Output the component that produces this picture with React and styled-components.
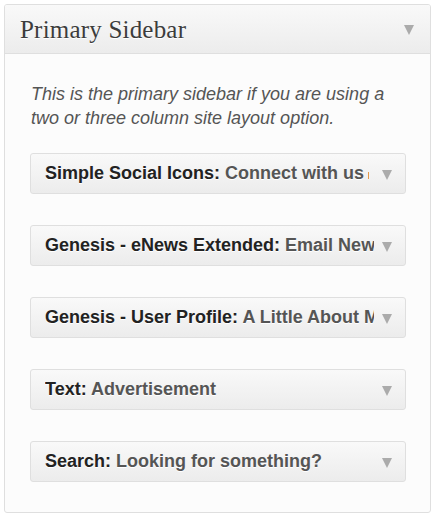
import React from 'react'
import styled, { createGlobalStyle } from 'styled-components'

const Global = createGlobalStyle`
    html, body {
        margin: 0;
        padding: 0;
        background: #ffffff;
    }
    body {
        padding: 4px 6px 4px 4px;
    }
`;

const Panel = styled.section`
    width: 427px;
    box-sizing: border-box;
    border: 1px solid #dfdfdf;
    border-radius: 3px;
    background: #fcfcfc;
    overflow: hidden;
`;

const Header = styled.div`
    display: flex;
    align-items: center;
    justify-content: space-between;
    height: 48px;
    padding: 0 16px 0 15px;
    background: linear-gradient(to bottom, #f9f9f9, #ececec);
    border-bottom: 1px solid #dfdfdf;
`;

const Title = styled.h2`
    margin: 0;
    font-family: "Liberation Serif", "DejaVu Serif", serif;
    font-weight: normal;
    font-size: 25px;
    letter-spacing: 0.2px;
    color: #3c3c3c;
    text-shadow: 0 1px 0 #fff;
    padding-top: 1px;
`;

const Arrow = styled.span`
    width: 0;
    height: 0;
    border-left: 5px solid transparent;
    border-right: 5px solid transparent;
    border-top: 10px solid #ababab;
    margin-top: ${p => p.$drop}px;
    flex: none;
`;

const Body = styled.div`
    padding: 28px 24px 30px 25px;
`;

const Desc = styled.p`
    margin: 0 0 23px 1px;
    font-family: "Liberation Sans", Arial, sans-serif;
    font-style: italic;
    font-size: 18px;
    line-height: 24px;
    color: #555;
`;

const List = styled.div`
    display: flex;
    flex-direction: column;
    gap: 31px;
`;

const Widget = styled.div`
    display: flex;
    align-items: center;
    height: 41px;
    box-sizing: border-box;
    padding: 0 13px 0 14px;
    border: 1px solid #dfdfdf;
    border-radius: 3px;
    background: linear-gradient(to bottom, #f9f9f9, #ececec);
`;

const Name = styled.div`
    flex: 1;
    min-width: 0;
    white-space: nowrap;
    overflow: hidden;
    margin-right: 8px;
    font-family: "Liberation Sans", Arial, sans-serif;
    font-weight: bold;
    font-size: 18px;
    color: #222;
    text-shadow: 0 1px 0 #fff;
`;

const Sub = styled.span`
    color: #555;
`;

const Accent = styled.span`
    display: inline-block;
    width: 1px;
    height: 7px;
    margin-left: 4px;
    background: #e59a4a;
`;

const widgets = [
    { name: 'Simple Social Icons', sub: 'Connect with us', extra: true },
    { name: 'Genesis - eNews Extended', sub: 'Email Newsletter' },
    { name: 'Genesis - User Profile', sub: 'A Little About Me' },
    { name: 'Text', sub: 'Advertisement' },
    { name: 'Search', sub: 'Looking for something?' },
];

const App = () => {
    return (
        <>
            <Global />
            <Panel>
                <Header>
                    <Title>Primary Sidebar</Title>
                    <Arrow $drop={2} />
                </Header>
                <Body>
                    <Desc>This is the primary sidebar if you are using a two or three column site layout option.</Desc>
                    <List>
                        {widgets.map(w => (
                            <Widget key={w.name}>
                                <Name>
                                    {w.name}: <Sub>{w.sub}</Sub>
                                    {w.extra && <Accent />}
                                </Name>
                                <Arrow $drop={3} />
                            </Widget>
                        ))}
                    </List>
                </Body>
            </Panel>
        </>
    )
}

export default App
